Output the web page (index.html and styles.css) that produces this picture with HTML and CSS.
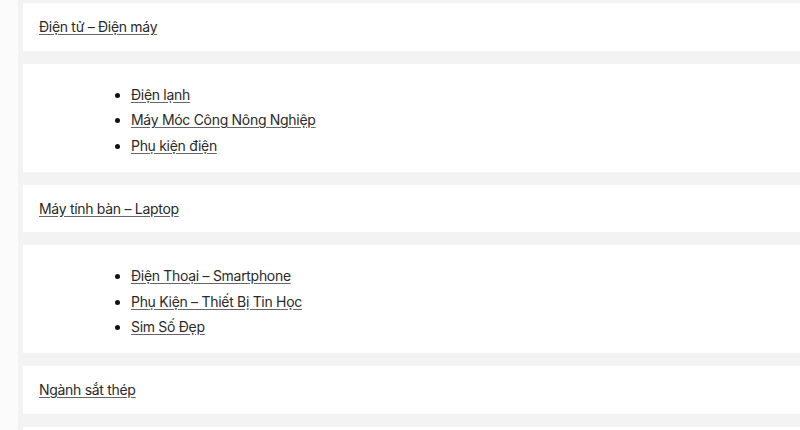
FILE: index.html
```html
<!DOCTYPE html>
<html lang="vi">
<head>
<meta charset="utf-8">
<link rel="stylesheet" href="styles.css">
</head>
<body>
<div class="page">
  <div class="rail"></div>
  <div class="stack">
    <div class="panel head"><a href="#">Điện tử – Điện máy</a></div>
    <div class="panel list">
      <ul>
        <li><a href="#">Điện lạnh</a></li>
        <li><a href="#">Máy Móc Công Nông Nghiệp</a></li>
        <li><a href="#">Phụ kiện điện</a></li>
      </ul>
    </div>
    <div class="panel head"><a href="#">Máy tính bàn – Laptop</a></div>
    <div class="panel list">
      <ul>
        <li><a href="#">Điện Thoại – Smartphone</a></li>
        <li><a href="#">Phụ Kiện – Thiết Bị Tin Học</a></li>
        <li><a href="#">Sim Số Đẹp</a></li>
      </ul>
    </div>
    <div class="panel head"><a href="#">Ngành sắt thép</a></div>
    <div class="panel tail"></div>
  </div>
</div>
</body>
</html>
```
FILE: styles.css
```css
html, body {
  margin: 0;
  padding: 0;
  height: 100%;
  overflow: hidden;
}
body {
  background: #fbfbfb;
  font-family: Inter, "Noto Sans", sans-serif;
  font-size: 14px;
  font-weight: 400;
  letter-spacing: -0.3px;
  color: #222;
}
.page {
  display: flex;
  height: 100%;
}
.rail {
  width: 18px;
  flex: none;
  background: #fbfbfb;
}
.stack {
  flex: 1;
  background: #f3f3f3;
  padding: 3px 0 0 5px;
  display: flex;
  flex-direction: column;
  gap: 13px;
}
.panel {
  background: #fff;
}
.head {
  padding: 12px 16px;
  line-height: 23.5px;
}
.list {
  height: 108px;
  box-sizing: border-box;
  padding: 18px 16px 14px;
  flex: none;
}
.tail {
  height: 20px;
  flex: none;
}
.list ul {
  margin: 0 0 0 52px;
  padding: 0 0 0 40px;
  line-height: 25.5px;
}
.list li::marker {
  color: #111;
}
a {
  color: #2a2a2a;
  text-decoration: underline;
  text-decoration-color: #666;
  text-underline-offset: 2px;
}
```
